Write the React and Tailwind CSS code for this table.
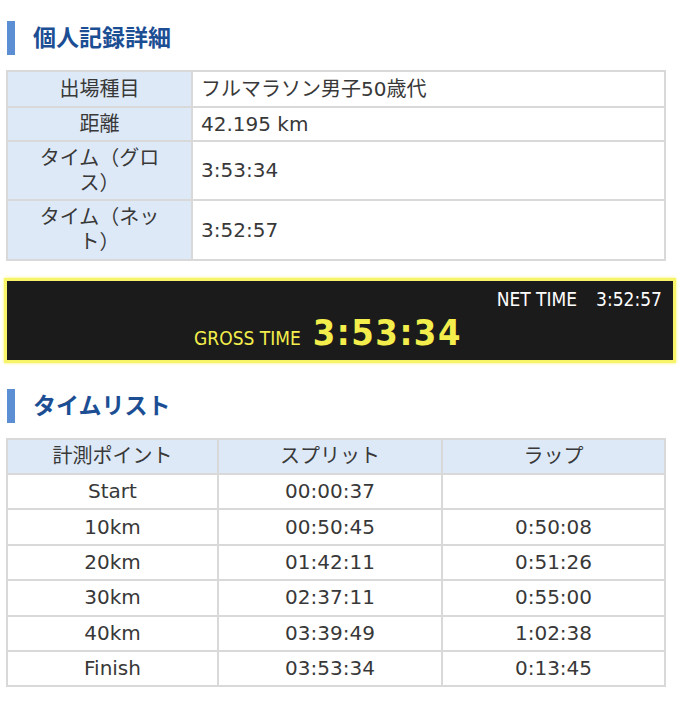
import React from 'react';

const font = { fontFamily: '"DejaVu Sans", "Noto Sans CJK JP", sans-serif' };

const Heading = ({ children }) => (
  <div className="flex items-center h-[34px] pl-[7px]">
    <div className="w-[8px] h-[34px] bg-[#5b8ed2]"></div>
    <h2 className="ml-[18px] text-[23px] font-bold text-[#1c4e94] leading-none">{children}</h2>
  </div>
);

const details = [
  { label: '出場種目', value: 'フルマラソン男子50歳代', h: 'h-[36px]' },
  { label: '距離', value: '42.195 km', h: 'h-[34px]' },
  { label: <>タイム（グロ<br />ス）</>, value: '3:53:34', h: 'h-[59px]' },
  { label: <>タイム（ネッ<br />ト）</>, value: '3:52:57', h: 'h-[60px]' },
];

const laps = [
  ['Start', '00:00:37', ''],
  ['10km', '00:50:45', '0:50:08'],
  ['20km', '01:42:11', '0:51:26'],
  ['30km', '02:37:11', '0:55:00'],
  ['40km', '03:39:49', '1:02:38'],
  ['Finish', '03:53:34', '0:13:45'],
];

export default function App() {
  return (
    <div className="w-[680px] h-[703px] bg-white text-[#383838] overflow-hidden" style={font}>
      <div className="pt-[21px]">
        <Heading>個人記録詳細</Heading>
      </div>

      <table className="mt-[15px] ml-[6px] w-[660px] border-collapse text-[20px] leading-[1.25]">
        <tbody>
          {details.map((d, i) => (
            <tr key={i} className={d.h}>
              <th className="w-[185px] border-2 border-[#d9d9d9] bg-[#dde9f7] font-normal text-center">{d.label}</th>
              <td className="border-2 border-[#d9d9d9] pl-[8px]">{d.value}</td>
            </tr>
          ))}
        </tbody>
      </table>

      <div className="mt-[17px] mx-[4px] h-[85px] bg-[#1b1b1b] border-[3px] border-[#f7f46a] shadow-[0_0_3px_#f7f46a] flex flex-col" style={{ fontFamily: '"DejaVu Sans Condensed", "DejaVu Sans", sans-serif' }}>
        <div className="flex justify-end pr-[11px] pt-[9px] text-white text-[19px] leading-none">
          <span>NET TIME</span>
          <span className="ml-[19px]">3:52:57</span>
        </div>
        <div className="flex justify-center items-baseline mt-[6px] pr-[24px]">
          <span className="text-[#f3ee4c] text-[19px]">GROSS TIME</span>
          <span className="ml-[12px] text-[#f3ee4c] text-[36px] font-bold tracking-[1.5px] leading-none">3:53:34</span>
        </div>
      </div>

      <div className="mt-[26px]">
        <Heading>タイムリスト</Heading>
      </div>

      <table className="mt-[15px] ml-[6px] w-[660px] border-collapse text-[20px] leading-[1.25] text-center">
        <thead>
          <tr className="h-[35px] bg-[#dde9f7]">
            <th className="w-[211px] border-2 border-[#d9d9d9] font-normal">計測ポイント</th>
            <th className="w-[224px] border-2 border-[#d9d9d9] font-normal">スプリット</th>
            <th className="border-2 border-[#d9d9d9] font-normal">ラップ</th>
          </tr>
        </thead>
        <tbody>
          {laps.map((r, i) => (
            <tr key={i} className="h-[35.4px]">
              <td className="border-2 border-[#d9d9d9]">{r[0]}</td>
              <td className="border-2 border-[#d9d9d9]">{r[1]}</td>
              <td className="border-2 border-[#d9d9d9]">{r[2]}</td>
            </tr>
          ))}
        </tbody>
      </table>
    </div>
  );
}
